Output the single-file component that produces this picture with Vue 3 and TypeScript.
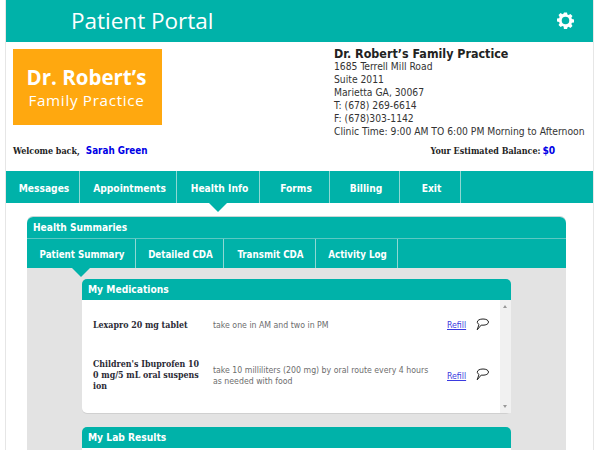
<script setup lang="ts">
const navItems = [
  { label: 'Messages', width: 74 },
  { label: 'Appointments', width: 97 },
  { label: 'Health Info', width: 83, active: true },
  { label: 'Forms', width: 70 },
  { label: 'Billing', width: 70 },
  { label: 'Exit', width: 61 },
]
const subTabs = [
  { label: 'Patient Summary', width: 109, active: true },
  { label: 'Detailed CDA', width: 88 },
  { label: 'Transmit CDA', width: 92 },
  { label: 'Activity Log', width: 82 },
]
const clinicLines = [
  '1685 Terrell Mill Road',
  'Suite 2011',
  'Marietta GA, 30067',
  'T: (678) 269-6614',
  'F: (678)303-1142',
  'Clinic Time: 9:00 AM TO 6:00 PM Morning to Afternoon',
]
</script>

<template>
  <div class="page">
    <header class="top">
      <span class="portal">Patient Portal</span>
      <svg class="gear" width="17" height="17" viewBox="0 0 18 18">
        <path fill="#fff" fill-rule="evenodd" d="M7.4 0.5h3.2l.4 2.2 1.3.6 1.9-1.2 2.2 2.2-1.2 1.9.6 1.3 2.2.4v3.2l-2.2.4-.6 1.3 1.2 1.9-2.2 2.2-1.9-1.2-1.3.6-.4 2.2H7.4L7 15.3l-1.3-.6-1.9 1.2-2.2-2.2 1.2-1.9-.6-1.3-2.2-.4V6.9l2.2-.4.6-1.3-1.2-1.9 2.2-2.2 1.9 1.2L7 1.7z M9 5a4 4 0 1 0 0 8 4 4 0 0 0 0-8z" />
      </svg>
    </header>

    <section class="info">
      <div class="logo">
        <span class="logo-a">Dr. Robert’s</span>
        <span class="logo-b">Family Practice</span>
      </div>
      <div class="clinic">
        <div class="clinic-name">Dr. Robert’s Family Practice</div>
        <div v-for="line in clinicLines" :key="line" class="clinic-line">{{ line }}</div>
      </div>
    </section>

    <section class="welcome">
      <span class="serif-b">Welcome back,</span>
      <span class="user">Sarah Green</span>
      <span class="serif-b balance">Your Estimated Balance:</span>
      <span class="amount">$0</span>
    </section>

    <nav class="nav">
      <div
        v-for="item in navItems"
        :key="item.label"
        class="nav-item"
        :class="{ active: item.active }"
        :style="{ width: item.width + 'px' }"
      >{{ item.label }}</div>
    </nav>

    <section class="panel">
      <div class="panel-head">Health Summaries</div>
      <div class="tabs">
        <div
          v-for="tab in subTabs"
          :key="tab.label"
          class="tab"
          :class="{ active: tab.active }"
          :style="{ width: tab.width + 'px' }"
        >{{ tab.label }}</div>
      </div>
      <div class="panel-body">
        <article class="card">
          <div class="card-head">My Medications</div>
          <div class="card-body">
            <div class="rows">
              <div class="row row-one">
                <div class="drug">Lexapro 20 mg tablet</div>
                <div class="dose">take one in AM and two in PM</div>
                <a class="refill">Refill</a>
                <svg class="bubble" width="13" height="13" viewBox="0 0 13 13">
                  <path fill="none" stroke="#222" stroke-width="1" d="M7 1C10.2 1 12.5 2.2 12.5 4.1 12.5 6 10 7.2 7 7.2 6.4 7.2 5.8 7.2 5.2 7.1L1.2 11.8 3 6.4C2 5.8 1.3 5 1.3 4.1 1.3 2.2 3.8 1 7 1Z" />
                </svg>
              </div>
              <div class="row row-two">
                <div class="drug">Children's Ibuprofen 10<br />0 mg/5 mL oral suspens<br />ion</div>
                <div class="dose">take 10 milliliters (200 mg) by oral route every 4 hours<br />as needed with food</div>
                <a class="refill">Refill</a>
                <svg class="bubble" width="13" height="13" viewBox="0 0 13 13">
                  <path fill="none" stroke="#222" stroke-width="1" d="M7 1C10.2 1 12.5 2.2 12.5 4.1 12.5 6 10 7.2 7 7.2 6.4 7.2 5.8 7.2 5.2 7.1L1.2 11.8 3 6.4C2 5.8 1.3 5 1.3 4.1 1.3 2.2 3.8 1 7 1Z" />
                </svg>
              </div>
            </div>
            <div class="scrollbar">
              <i class="up"></i>
              <i class="down"></i>
            </div>
          </div>
        </article>
        <article class="card">
          <div class="card-head">My Lab Results</div>
          <div class="card-body lab"></div>
        </article>
      </div>
    </section>
  </div>
</template>

<style>
html, body { margin: 0; padding: 0; background: #fff; overflow: hidden; }
</style>

<style scoped>
.page {
  width: 587px;
  height: 450px;
  margin-left: 6px;
  background: #fff;
  box-shadow: -1px 0 0 #e6e6e6, 1px 0 0 #e6e6e6;
  overflow: hidden;
  font-family: "DejaVu Sans", Verdana, sans-serif;
  font-stretch: condensed;
}
.top {
  height: 42px;
  background: #00b2a9;
  display: flex;
  align-items: center;
  justify-content: space-between;
  padding: 0 19px 0 65px;
}
.portal {
  color: #fff;
  font-family: "Open Sans", sans-serif;
  font-stretch: normal;
  font-size: 22.5px;
  line-height: 42px;
}
.gear { margin-bottom: 2px; }
.info {
  height: 100px;
  display: flex;
  padding: 5px 0 0 7px;
  box-sizing: border-box;
}
.logo {
  flex: none;
  width: 149px;
  height: 76px;
  margin-top: 2px;
  background: #ffa80f;
  color: #fff;
  font-family: "Open Sans", sans-serif;
  font-stretch: normal;
  display: flex;
  flex-direction: column;
  align-items: center;
  justify-content: center;
  padding: 1px 2px 0 0;
  box-sizing: border-box;
}
.logo-a { font-size: 20.5px; font-weight: 700; line-height: 25px; }
.logo-b { font-size: 15.2px; line-height: 20px; letter-spacing: 0.7px; }
.clinic { margin-left: 172px; color: #333; white-space: nowrap; }
.clinic-name { font-size: 12.4px; font-weight: 700; line-height: 13px; color: #222; }
.clinic-line { font-size: 10.25px; line-height: 13px; }
.welcome {
  height: 29px;
  display: flex;
  align-items: center;
  padding: 0 0 12px 7px;
  box-sizing: border-box;
  font-size: 9.8px;
  font-weight: 700;
  white-space: nowrap;
}
.serif-b { font-family: "DejaVu Serif", serif; color: #222; font-size: 8.9px; }
.user { color: #0000e6; margin-left: 6px; }
.balance { margin-left: 283px; }
.amount { color: #0000e6; margin-left: 2px; font-size: 10.2px; }
.nav {
  height: 32px;
  background: #00b2a9;
  display: flex;
}
.nav-item {
  box-sizing: border-box;
  border-right: 1px solid #8fd8d3;
  padding-left: 3px;
  color: #fff;
  font-size: 10.2px;
  font-weight: 700;
  text-align: center;
  line-height: 35px;
  position: relative;
}
.nav-item.active::after,
.tab.active::after {
  content: "";
  position: absolute;
  left: 50%;
  margin-left: -9px;
  top: 100%;
  border-left: 9px solid transparent;
  border-right: 9px solid transparent;
  border-top: 9px solid #00b2a9;
}
.panel {
  margin: 14px 0 0 21px;
  width: 539px;
  border-radius: 6px 6px 0 0;
  box-shadow: 0 -1px 0 #c9d6d5;
}
.panel-head {
  height: 22px;
  background: #00b2a9;
  border-radius: 6px 6px 0 0;
  border-bottom: 1px solid #5cc8c2;
  box-sizing: border-box;
  color: #fff;
  font-size: 10.1px;
  font-weight: 700;
  line-height: 21px;
  padding-left: 6px;
}
.tabs {
  height: 29px;
  background: #00b2a9;
  display: flex;
}
.tab {
  box-sizing: border-box;
  border-right: 1px solid #8fd8d3;
  padding-left: 2px;
  color: #fff;
  font-size: 9.7px;
  font-weight: 700;
  line-height: 32px;
  text-align: center;
  position: relative;
}
.panel-body {
  background: #e3e3e3;
  padding: 11px 55px 0;
  height: 190px;
  box-sizing: border-box;
}
.card { margin-bottom: 14px; }
.card-head {
  height: 21px;
  background: #00b2a9;
  border-radius: 5px 5px 0 0;
  color: #fff;
  font-size: 10.2px;
  font-weight: 700;
  line-height: 21px;
  padding-left: 6px;
}
.card-body {
  height: 113px;
  background: #fff;
  border-radius: 0 0 5px 5px;
  display: flex;
  box-shadow: 0 1px 0 #d0d0d0;
}
.card-body.lab { height: 30px; }
.rows { flex: 1; }
.row {
  display: flex;
  align-items: center;
  padding-left: 11px;
  white-space: nowrap;
}
.row-one { height: 50px; }
.row-two { height: 50px; }
.drug {
  width: 120px;
  flex: none;
  font-family: "DejaVu Serif", serif;
  font-size: 8.8px;
  font-weight: 700;
  line-height: 11px;
  color: #2a2a35;
}
.dose {
  flex: none;
  width: 234px;
  font-size: 8.7px;
  line-height: 11px;
  color: #6d6d6d;
}
.row-two .dose { padding-top: 1px; }
.refill {
  color: #3a3ae0;
  font-size: 8.7px;
  text-decoration: underline;
}
.row-two .refill { padding-top: 2px; }
.bubble { margin-left: 10px; margin-top: -2px; }
.scrollbar {
  width: 11px;
  background: #f1f1f1;
  position: relative;
}
.up, .down {
  position: absolute;
  left: 3px;
  border-left: 2.5px solid transparent;
  border-right: 2.5px solid transparent;
}
.up { top: 5px; border-bottom: 3px solid #999; }
.down { bottom: 5px; border-top: 3px solid #999; }
</style>
